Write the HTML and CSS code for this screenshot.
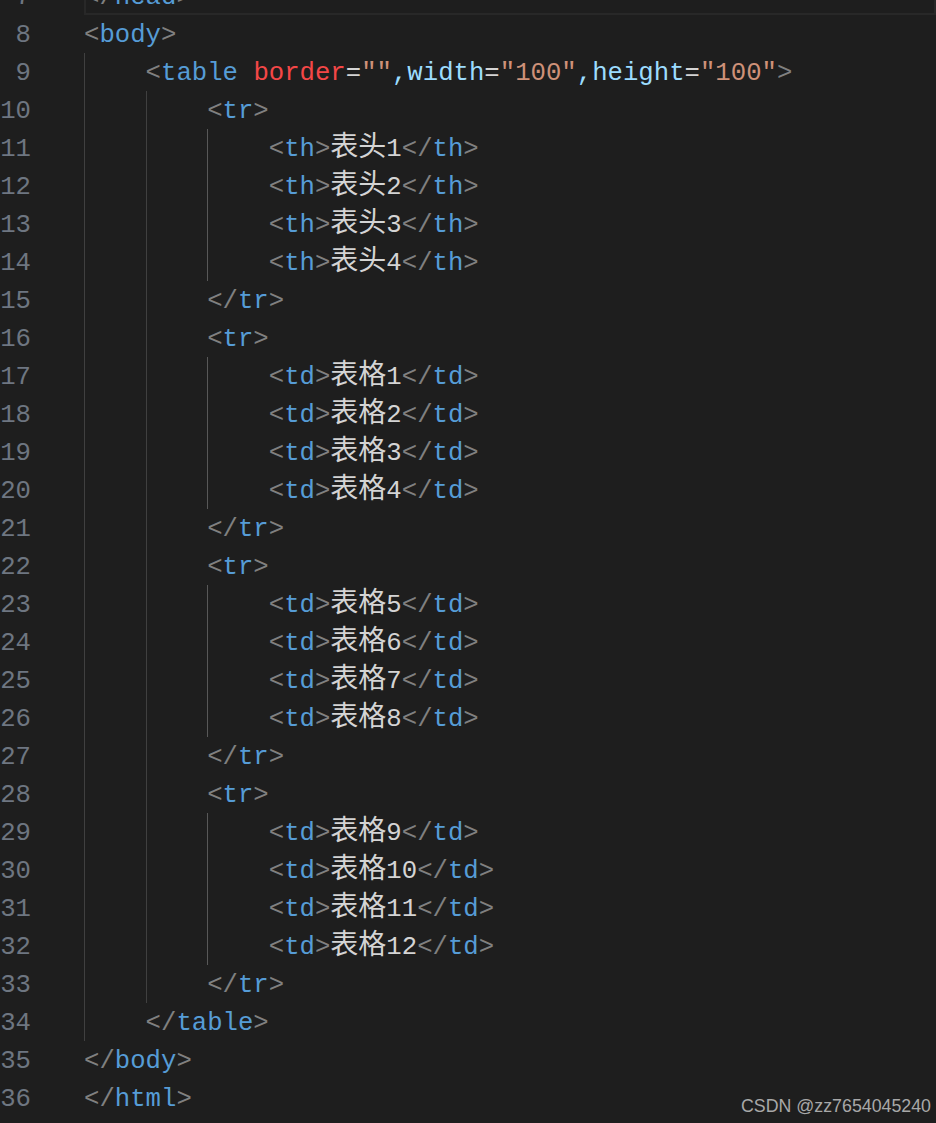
FILE: index.html
```html
<!DOCTYPE html>
<html lang="zh">
<head>
<meta charset="utf-8">
<title>editor</title>
<link rel="stylesheet" href="styles.css">
</head>
<body>
<div class="editor">
  <div class="row"><span class="ln">7</span><span class="code current"><span class="p">&lt;/</span><span class="t">head</span><span class="p">&gt;</span></span></div>
  <div class="row"><span class="ln">8</span><span class="code"><span class="p">&lt;</span><span class="t">body</span><span class="p">&gt;</span></span></div>
  <div class="row"><span class="ln">9</span><span class="code"><span class="g"></span><span class="p">&lt;</span><span class="t">table</span> <span class="e">border</span><span class="o">=</span><span class="s">""</span><span class="a">,width</span><span class="o">=</span><span class="s">"100"</span><span class="a">,height</span><span class="o">=</span><span class="s">"100"</span><span class="p">&gt;</span></span></div>
  <div class="row"><span class="ln">10</span><span class="code"><span class="g"></span><span class="g"></span><span class="p">&lt;</span><span class="t">tr</span><span class="p">&gt;</span></span></div>
  <div class="row"><span class="ln">11</span><span class="code"><span class="g"></span><span class="g"></span><span class="g g3"></span><span class="p">&lt;</span><span class="t">th</span><span class="p">&gt;</span><span class="cjk">表头</span><span class="x">1</span><span class="p">&lt;/</span><span class="t">th</span><span class="p">&gt;</span></span></div>
  <div class="row"><span class="ln">12</span><span class="code"><span class="g"></span><span class="g"></span><span class="g g3"></span><span class="p">&lt;</span><span class="t">th</span><span class="p">&gt;</span><span class="cjk">表头</span><span class="x">2</span><span class="p">&lt;/</span><span class="t">th</span><span class="p">&gt;</span></span></div>
  <div class="row"><span class="ln">13</span><span class="code"><span class="g"></span><span class="g"></span><span class="g g3"></span><span class="p">&lt;</span><span class="t">th</span><span class="p">&gt;</span><span class="cjk">表头</span><span class="x">3</span><span class="p">&lt;/</span><span class="t">th</span><span class="p">&gt;</span></span></div>
  <div class="row"><span class="ln">14</span><span class="code"><span class="g"></span><span class="g"></span><span class="g g3"></span><span class="p">&lt;</span><span class="t">th</span><span class="p">&gt;</span><span class="cjk">表头</span><span class="x">4</span><span class="p">&lt;/</span><span class="t">th</span><span class="p">&gt;</span></span></div>
  <div class="row"><span class="ln">15</span><span class="code"><span class="g"></span><span class="g"></span><span class="p">&lt;/</span><span class="t">tr</span><span class="p">&gt;</span></span></div>
  <div class="row"><span class="ln">16</span><span class="code"><span class="g"></span><span class="g"></span><span class="p">&lt;</span><span class="t">tr</span><span class="p">&gt;</span></span></div>
  <div class="row"><span class="ln">17</span><span class="code"><span class="g"></span><span class="g"></span><span class="g g3"></span><span class="p">&lt;</span><span class="t">td</span><span class="p">&gt;</span><span class="cjk">表格</span><span class="x">1</span><span class="p">&lt;/</span><span class="t">td</span><span class="p">&gt;</span></span></div>
  <div class="row"><span class="ln">18</span><span class="code"><span class="g"></span><span class="g"></span><span class="g g3"></span><span class="p">&lt;</span><span class="t">td</span><span class="p">&gt;</span><span class="cjk">表格</span><span class="x">2</span><span class="p">&lt;/</span><span class="t">td</span><span class="p">&gt;</span></span></div>
  <div class="row"><span class="ln">19</span><span class="code"><span class="g"></span><span class="g"></span><span class="g g3"></span><span class="p">&lt;</span><span class="t">td</span><span class="p">&gt;</span><span class="cjk">表格</span><span class="x">3</span><span class="p">&lt;/</span><span class="t">td</span><span class="p">&gt;</span></span></div>
  <div class="row"><span class="ln">20</span><span class="code"><span class="g"></span><span class="g"></span><span class="g g3"></span><span class="p">&lt;</span><span class="t">td</span><span class="p">&gt;</span><span class="cjk">表格</span><span class="x">4</span><span class="p">&lt;/</span><span class="t">td</span><span class="p">&gt;</span></span></div>
  <div class="row"><span class="ln">21</span><span class="code"><span class="g"></span><span class="g"></span><span class="p">&lt;/</span><span class="t">tr</span><span class="p">&gt;</span></span></div>
  <div class="row"><span class="ln">22</span><span class="code"><span class="g"></span><span class="g"></span><span class="p">&lt;</span><span class="t">tr</span><span class="p">&gt;</span></span></div>
  <div class="row"><span class="ln">23</span><span class="code"><span class="g"></span><span class="g"></span><span class="g g3"></span><span class="p">&lt;</span><span class="t">td</span><span class="p">&gt;</span><span class="cjk">表格</span><span class="x">5</span><span class="p">&lt;/</span><span class="t">td</span><span class="p">&gt;</span></span></div>
  <div class="row"><span class="ln">24</span><span class="code"><span class="g"></span><span class="g"></span><span class="g g3"></span><span class="p">&lt;</span><span class="t">td</span><span class="p">&gt;</span><span class="cjk">表格</span><span class="x">6</span><span class="p">&lt;/</span><span class="t">td</span><span class="p">&gt;</span></span></div>
  <div class="row"><span class="ln">25</span><span class="code"><span class="g"></span><span class="g"></span><span class="g g3"></span><span class="p">&lt;</span><span class="t">td</span><span class="p">&gt;</span><span class="cjk">表格</span><span class="x">7</span><span class="p">&lt;/</span><span class="t">td</span><span class="p">&gt;</span></span></div>
  <div class="row"><span class="ln">26</span><span class="code"><span class="g"></span><span class="g"></span><span class="g g3"></span><span class="p">&lt;</span><span class="t">td</span><span class="p">&gt;</span><span class="cjk">表格</span><span class="x">8</span><span class="p">&lt;/</span><span class="t">td</span><span class="p">&gt;</span></span></div>
  <div class="row"><span class="ln">27</span><span class="code"><span class="g"></span><span class="g"></span><span class="p">&lt;/</span><span class="t">tr</span><span class="p">&gt;</span></span></div>
  <div class="row"><span class="ln">28</span><span class="code"><span class="g"></span><span class="g"></span><span class="p">&lt;</span><span class="t">tr</span><span class="p">&gt;</span></span></div>
  <div class="row"><span class="ln">29</span><span class="code"><span class="g"></span><span class="g"></span><span class="g g3"></span><span class="p">&lt;</span><span class="t">td</span><span class="p">&gt;</span><span class="cjk">表格</span><span class="x">9</span><span class="p">&lt;/</span><span class="t">td</span><span class="p">&gt;</span></span></div>
  <div class="row"><span class="ln">30</span><span class="code"><span class="g"></span><span class="g"></span><span class="g g3"></span><span class="p">&lt;</span><span class="t">td</span><span class="p">&gt;</span><span class="cjk">表格</span><span class="x">10</span><span class="p">&lt;/</span><span class="t">td</span><span class="p">&gt;</span></span></div>
  <div class="row"><span class="ln">31</span><span class="code"><span class="g"></span><span class="g"></span><span class="g g3"></span><span class="p">&lt;</span><span class="t">td</span><span class="p">&gt;</span><span class="cjk">表格</span><span class="x">11</span><span class="p">&lt;/</span><span class="t">td</span><span class="p">&gt;</span></span></div>
  <div class="row"><span class="ln">32</span><span class="code"><span class="g"></span><span class="g"></span><span class="g g3"></span><span class="p">&lt;</span><span class="t">td</span><span class="p">&gt;</span><span class="cjk">表格</span><span class="x">12</span><span class="p">&lt;/</span><span class="t">td</span><span class="p">&gt;</span></span></div>
  <div class="row"><span class="ln">33</span><span class="code"><span class="g"></span><span class="g"></span><span class="p">&lt;/</span><span class="t">tr</span><span class="p">&gt;</span></span></div>
  <div class="row"><span class="ln">34</span><span class="code"><span class="g"></span><span class="p">&lt;/</span><span class="t">table</span><span class="p">&gt;</span></span></div>
  <div class="row"><span class="ln">35</span><span class="code"><span class="p">&lt;/</span><span class="t">body</span><span class="p">&gt;</span></span></div>
  <div class="row"><span class="ln">36</span><span class="code"><span class="p">&lt;/</span><span class="t">html</span><span class="p">&gt;</span></span></div>
</div>
<div class="watermark">CSDN @zz7654045240</div>
</body>
</html>
```

FILE: styles.css
```css
html, body {
  margin: 0;
  padding: 0;
  background: #1e1e1e;
  overflow: hidden;
}
body {
  width: 936px;
  height: 1123px;
  position: relative;
}
.editor {
  margin-top: -23px;
  font-family: "Liberation Mono", "Noto Sans CJK SC", monospace;
  font-size: 25.67px;
  color: #d4d4d4;
}
.row {
  display: flex;
  height: 38px;
  line-height: 38px;
}
.ln {
  flex: none;
  width: 31px;
  margin-right: 53px;
  text-align: right;
  color: #6e7681;
  box-sizing: border-box;
  height: 38px;
  padding-top: 2px;
}
.code {
  flex: 1;
  white-space: pre;
  height: 38px;
  box-sizing: border-box;
  padding-top: 2px;
}
.code.current {
  box-shadow: inset 0 0 0 2px #282828;
}
.g {
  display: inline-block;
  width: 4ch;
  height: 38px;
  margin-top: -2px;
  vertical-align: top;
  box-sizing: border-box;
  border-left: 1px solid #404040;
}
.g.g3 {
  border-left-color: #585858;
}
.p { color: #808080; }
.t { color: #569cd6; }
.a { color: #9cdcfe; }
.e { color: #f44747; }
.s { color: #ce9178; }
.o { color: #d4d4d4; }
.x { color: #d4d4d4; }
.cjk {
  font-family: "Noto Sans CJK SC", sans-serif;
  font-size: 28px;
  line-height: 0;
  color: #d4d4d4;
}
.watermark {
  position: absolute;
  right: 5px;
  bottom: 6px;
  font-family: "Liberation Sans", Arial, sans-serif;
  font-size: 17.8px;
  line-height: 22px;
  color: #a8a8a8;
}
```
